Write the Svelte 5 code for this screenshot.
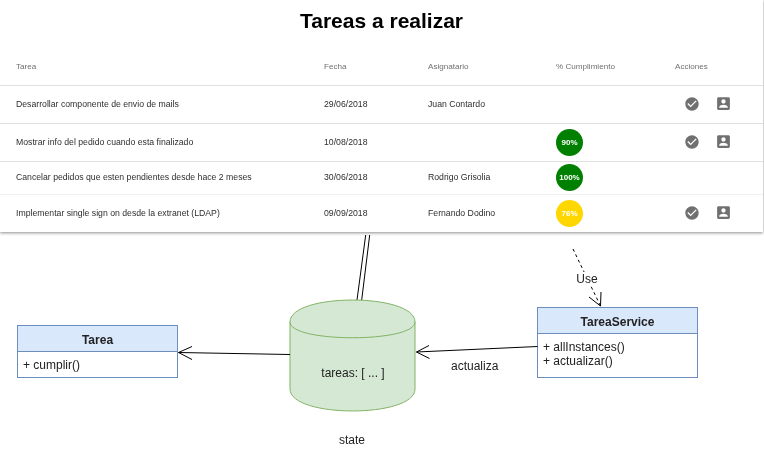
<script>
  const tasks = [
    { name: 'Desarrollar componente de envio de mails', date: '29/06/2018', who: 'Juan Contardo', pct: null, level: '', actions: true },
    { name: 'Mostrar info del pedido cuando esta finalizado', date: '10/08/2018', who: '', pct: '90%', level: 'green', actions: true },
    { name: 'Cancelar pedidos que esten pendientes desde hace 2 meses', date: '30/06/2018', who: 'Rodrigo Grisolia', pct: '100%', level: 'green', actions: false },
    { name: 'Implementar single sign on desde la extranet (LDAP)', date: '09/09/2018', who: 'Fernando Dodino', pct: '76%', level: 'yellow', actions: true }
  ];
</script>

<main class="page">
  <section class="card">
    <h1>Tareas a realizar</h1>
    <table>
      <thead>
        <tr>
          <th class="c-name">Tarea</th>
          <th class="c-date">Fecha</th>
          <th class="c-who">Asignatario</th>
          <th class="c-pct">% Cumplimiento</th>
          <th>Acciones</th>
        </tr>
      </thead>
      <tbody>
        {#each tasks as t}
          <tr>
            <td>{t.name}</td>
            <td>{t.date}</td>
            <td>{t.who}</td>
            <td class="pct-cell">
              {#if t.pct}<span class="pct {t.level}">{t.pct}</span>{/if}
            </td>
            <td class="act-cell">
              {#if t.actions}
                <div class="actions">
                  <svg class="ic-check" viewBox="0 0 24 24" aria-label="Cumplir"><path d="M12 2C6.48 2 2 6.48 2 12s4.48 10 10 10 10-4.48 10-10S17.52 2 12 2zm-2 15l-5-5 1.41-1.41L10 14.17l7.59-7.59L19 8l-9 9z"/></svg>
                  <svg class="ic-user" viewBox="0 0 24 24" aria-label="Asignar"><path d="M3 5v14c0 1.1.89 2 2 2h14c1.1 0 2-.9 2-2V5c0-1.1-.9-2-2-2H5c-1.11 0-2 .9-2 2zm12 4c0 1.66-1.34 3-3 3s-3-1.34-3-3 1.34-3 3-3 3 1.34 3 3zm-9 8c0-2 4-3.1 6-3.1s6 1.1 6 3.1v1H6v-1z"/></svg>
                </div>
              {/if}
            </td>
          </tr>
        {/each}
      </tbody>
    </table>
  </section>

  <svg class="diagram" viewBox="0 232 764 219" width="764" height="219">
    <!-- double association -->
    <path class="line" d="M365.7 235 L357 300 M369.7 235 L361.7 300"/>

    <!-- cylinder -->
    <path class="cyl" d="M290 322 C290 292.7 415 292.7 415 322 L415 389 C415 418.3 290 418.3 290 389 Z"/>
    <path class="cyl-top" d="M290 322 C290 343 415 343 415 322"/>
    <text x="353" y="377" text-anchor="middle">tareas: [ ... ]</text>
    <text x="352" y="444" text-anchor="middle">state</text>

    <!-- Tarea class -->
    <rect class="head" x="17.5" y="325.5" width="160" height="26"/>
    <rect class="body" x="17.5" y="351.5" width="160" height="26"/>
    <text class="title" x="97.5" y="344" text-anchor="middle">Tarea</text>
    <text x="23" y="369">+ cumplir()</text>

    <!-- TareaService class -->
    <rect class="head" x="537.5" y="307.5" width="160" height="26"/>
    <rect class="body" x="537.5" y="333.5" width="160" height="44"/>
    <text class="title" x="617.5" y="326" text-anchor="middle">TareaService</text>
    <text x="543" y="351">+ allInstances()</text>
    <text x="543" y="365">+ actualizar()</text>

    <!-- arrows -->
    <path class="line" d="M290 354.5 L178.5 352.5 M192 346.5 L178.5 352.5 L192 359.5"/>
    <path class="line" d="M537.5 346.5 L416.5 352 M429 345.5 L416.5 352 L429.5 358.5"/>
    <text x="451" y="370">actualiza</text>

    <path class="dash" d="M573 249 L600.5 306"/>
    <path class="line" d="M601 292 L600.5 306 L589 297"/>
    <rect class="label-bg" x="576" y="272" width="22" height="14"/>
    <text x="587" y="283" text-anchor="middle">Use</text>
  </svg>
</main>

<style>
  :global(body) {
    margin: 0;
    background: #fff;
  }
  .page {
    width: 764px;
    height: 451px;
    overflow: hidden;
    font-family: "Liberation Sans", Arial, sans-serif;
    filter: blur(0.3px);
  }
  .card {
    width: 763px;
    height: 232px;
    background: #fff;
    box-shadow: 0 1px 3px rgba(0, 0, 0, 0.45);
    position: relative;
  }
  h1 {
    margin: 0;
    padding-top: 8px;
    height: 39px;
    font-size: 21px;
    line-height: 26px;
    font-weight: 700;
    text-align: center;
    color: #000;
  }
  table {
    width: 100%;
    table-layout: fixed;
    border-collapse: separate;
    border-spacing: 0;
  }
  th {
    height: 38px;
    padding: 0;
    border-bottom: 1px solid #e0e0e0;
    font-size: 8.1px;
    font-weight: 400;
    text-align: left;
    color: #707070;
  }
  th:first-child,
  td:first-child {
    padding-left: 16px;
  }
  .c-name { width: 308px; box-sizing: content-box; }
  .c-date { width: 104px; }
  .c-who { width: 128px; }
  .c-pct { width: 119px; }
  td {
    padding: 0 0 2px;
    border-bottom: 1px solid #e0e0e0;
    font-size: 8.7px;
    color: #2e2e2e;
  }
  tbody tr:nth-child(3) td {
    border-bottom-color: #f0f0f0;
  }
  tbody tr:last-child td {
    border-bottom: 0;
  }
  td.pct-cell {
    padding: 2px 0 3px;
  }
  td.act-cell {
    padding: 0;
  }
  .pct {
    display: flex;
    align-items: center;
    justify-content: center;
    width: 27px;
    height: 27px;
    border-radius: 50%;
    color: #fff;
    font-size: 8px;
    font-weight: 700;
  }
  .green { background: #008000; }
  .yellow { background: #ffd700; }
  .actions {
    display: flex;
    align-items: center;
    gap: 15px;
    padding: 9px 0 11px 9px;
  }
  .actions svg {
    display: block;
    fill: #707070;
  }
  .ic-check { width: 16px; height: 16px; }
  .ic-user { width: 17px; height: 17px; }
  .diagram {
    display: block;
  }
  .diagram text {
    font-family: "Liberation Sans", Arial, sans-serif;
    font-size: 12px;
    fill: #222;
  }
  .diagram .title {
    font-weight: 700;
  }
  .line {
    fill: none;
    stroke: #000;
    stroke-width: 1;
  }
  .dash {
    fill: none;
    stroke: #000;
    stroke-width: 1;
    stroke-dasharray: 3 3;
  }
  .label-bg { fill: #fff; }
  .cyl {
    fill: #d5e8d4;
    stroke: #82b366;
    stroke-width: 1;
  }
  .cyl-top {
    fill: none;
    stroke: #82b366;
    stroke-width: 1;
  }
  .head {
    fill: #dae8fc;
    stroke: #6c8ebf;
    stroke-width: 1;
  }
  .body {
    fill: #fff;
    stroke: #6c8ebf;
    stroke-width: 1;
  }
</style>
